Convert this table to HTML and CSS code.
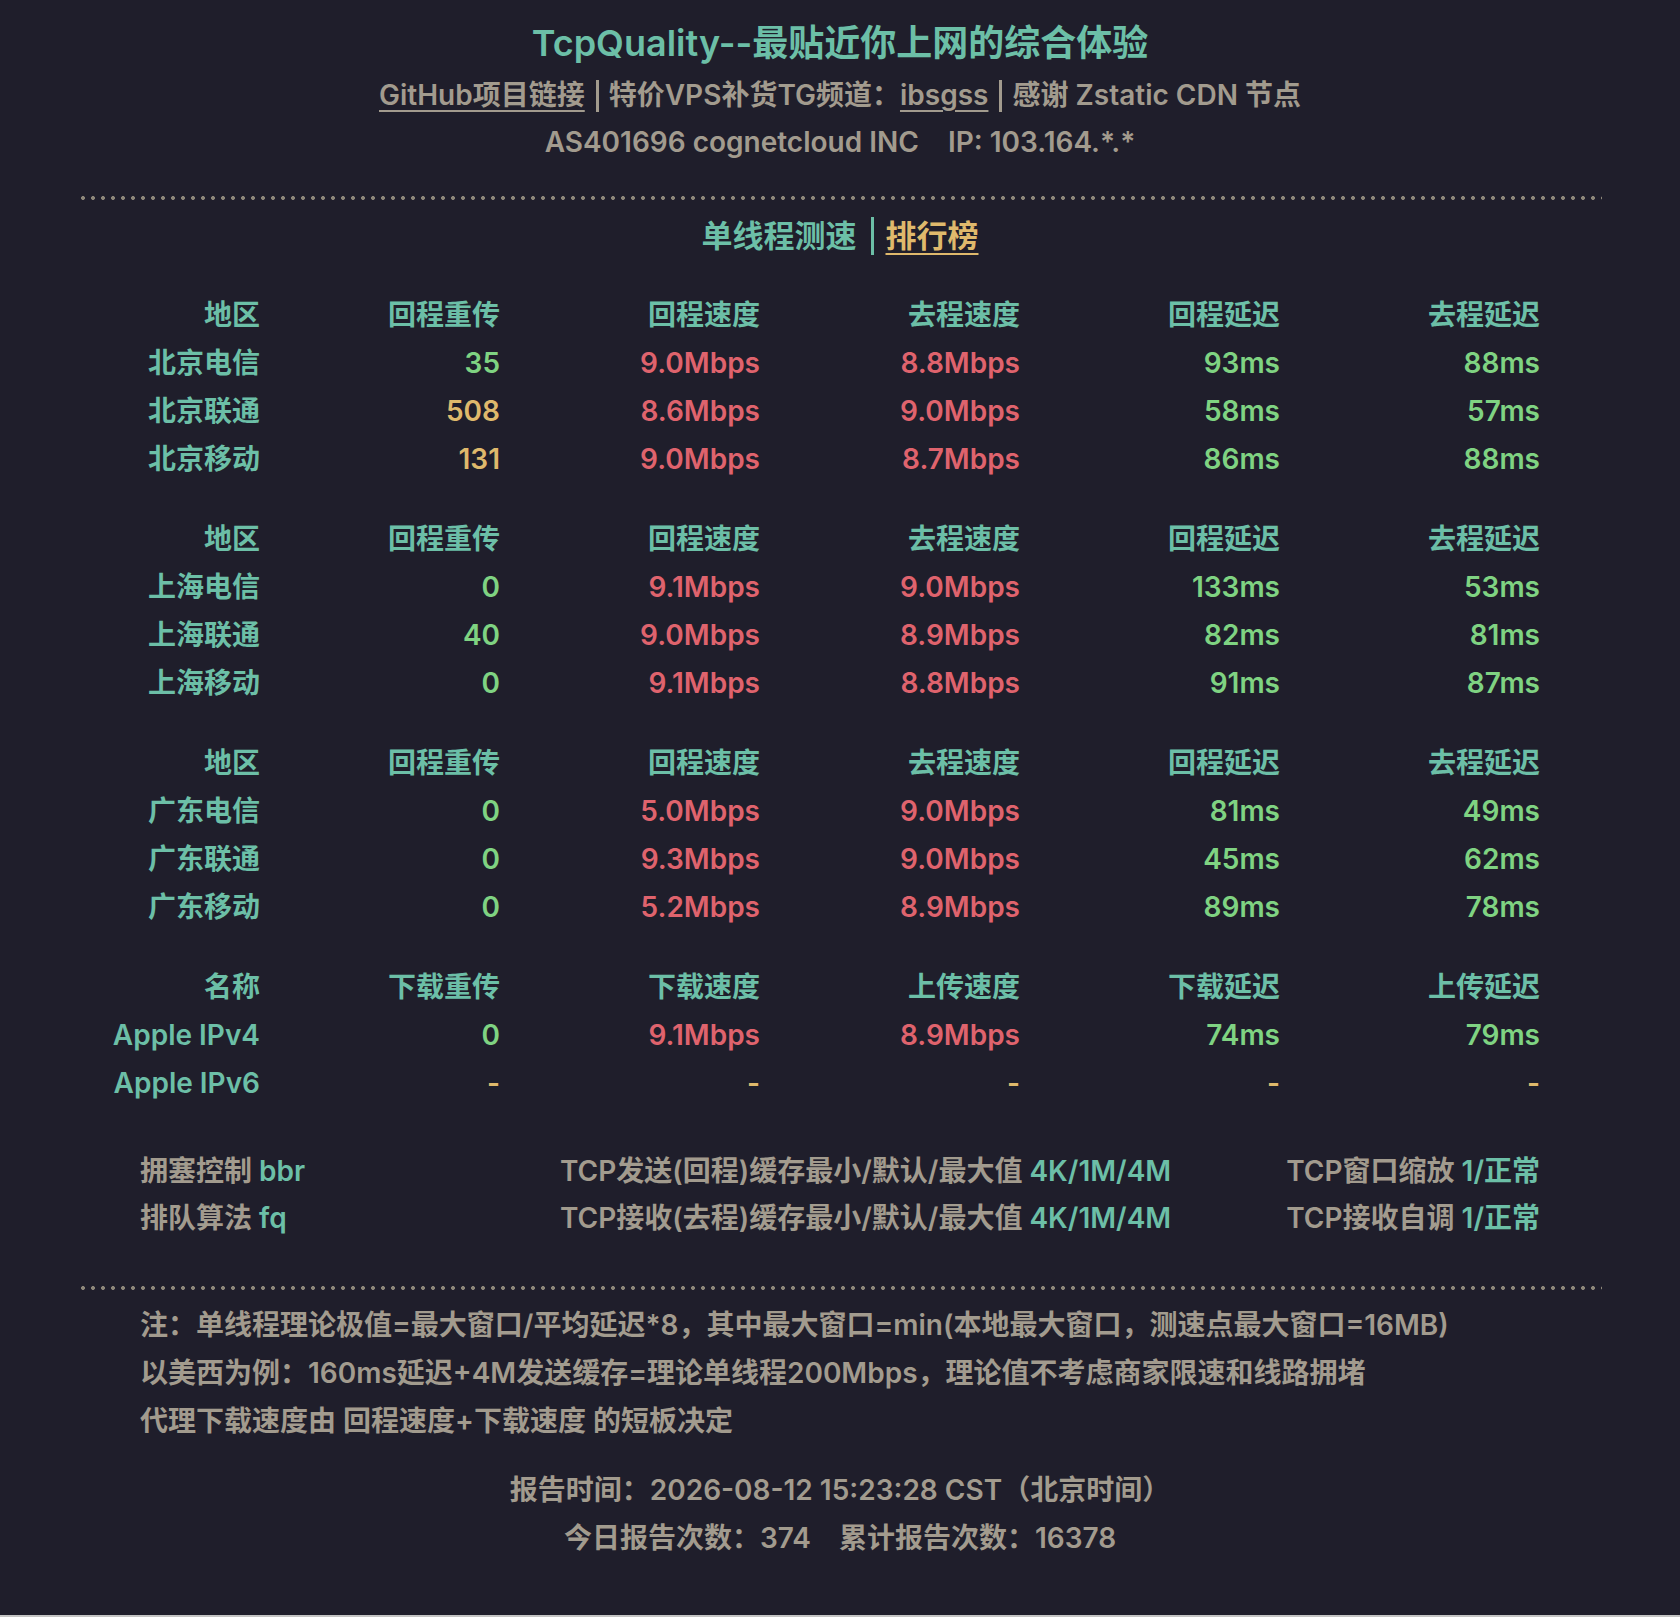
FILE: index.html
```html
<!DOCTYPE html>
<html lang="zh-CN">
<head>
<meta charset="utf-8">
<title>TcpQuality</title>
<link rel="stylesheet" href="styles.css">
</head>
<body>
<div class="page">
  <header class="head">
    <h1 class="title">TcpQuality--最贴近你上网的综合体验</h1>
    <p class="links"><a class="ul">GitHub项目链接</a><span class="sep"></span>特价VPS补货TG频道：<a class="ul">ibsgss</a><span class="sep"></span>感谢 Zstatic CDN 节点</p>
    <p class="asn"><span>AS401696 cognetcloud INC</span><span>IP: 103.164.*.*</span></p>
  </header>

  <div class="dots"></div>

  <h2 class="section">单线程测速<span class="vbar"></span><a class="rank">排行榜</a></h2>

  <div class="groups">
    <div class="grid">
      <div class="h">地区</div><div class="h">回程重传</div><div class="h">回程速度</div><div class="h">去程速度</div><div class="h">回程延迟</div><div class="h">去程延迟</div>
      <div class="h">北京电信</div><div class="g">35</div><div class="r">9.0Mbps</div><div class="r">8.8Mbps</div><div class="g">93ms</div><div class="g">88ms</div>
      <div class="h">北京联通</div><div class="y">508</div><div class="r">8.6Mbps</div><div class="r">9.0Mbps</div><div class="g">58ms</div><div class="g">57ms</div>
      <div class="h">北京移动</div><div class="y">131</div><div class="r">9.0Mbps</div><div class="r">8.7Mbps</div><div class="g">86ms</div><div class="g">88ms</div>
    </div>
    <div class="grid">
      <div class="h">地区</div><div class="h">回程重传</div><div class="h">回程速度</div><div class="h">去程速度</div><div class="h">回程延迟</div><div class="h">去程延迟</div>
      <div class="h">上海电信</div><div class="g">0</div><div class="r">9.1Mbps</div><div class="r">9.0Mbps</div><div class="g">133ms</div><div class="g">53ms</div>
      <div class="h">上海联通</div><div class="g">40</div><div class="r">9.0Mbps</div><div class="r">8.9Mbps</div><div class="g">82ms</div><div class="g">81ms</div>
      <div class="h">上海移动</div><div class="g">0</div><div class="r">9.1Mbps</div><div class="r">8.8Mbps</div><div class="g">91ms</div><div class="g">87ms</div>
    </div>
    <div class="grid">
      <div class="h">地区</div><div class="h">回程重传</div><div class="h">回程速度</div><div class="h">去程速度</div><div class="h">回程延迟</div><div class="h">去程延迟</div>
      <div class="h">广东电信</div><div class="g">0</div><div class="r">5.0Mbps</div><div class="r">9.0Mbps</div><div class="g">81ms</div><div class="g">49ms</div>
      <div class="h">广东联通</div><div class="g">0</div><div class="r">9.3Mbps</div><div class="r">9.0Mbps</div><div class="g">45ms</div><div class="g">62ms</div>
      <div class="h">广东移动</div><div class="g">0</div><div class="r">5.2Mbps</div><div class="r">8.9Mbps</div><div class="g">89ms</div><div class="g">78ms</div>
    </div>
    <div class="grid">
      <div class="h">名称</div><div class="h">下载重传</div><div class="h">下载速度</div><div class="h">上传速度</div><div class="h">下载延迟</div><div class="h">上传延迟</div>
      <div class="h">Apple IPv4</div><div class="g">0</div><div class="r">9.1Mbps</div><div class="r">8.9Mbps</div><div class="g">74ms</div><div class="g">79ms</div>
      <div class="h">Apple IPv6</div><div class="y">-</div><div class="y">-</div><div class="y">-</div><div class="y">-</div><div class="y">-</div>
    </div>
  </div>

  <div class="settings">
    <div>拥塞控制 <b>bbr</b></div><div>TCP发送(回程)缓存最小/默认/最大值 <b>4K/1M/4M</b></div><div class="end">TCP窗口缩放 <b>1/正常</b></div>
    <div>排队算法 <b>fq</b></div><div>TCP接收(去程)缓存最小/默认/最大值 <b>4K/1M/4M</b></div><div class="end">TCP接收自调 <b>1/正常</b></div>
  </div>

  <div class="dots dots2"></div>

  <div class="notes">
    <p>注：单线程理论极值=最大窗口/平均延迟*8，其中最大窗口=min(本地最大窗口，测速点最大窗口=16MB)</p>
    <p>以美西为例：160ms延迟+4M发送缓存=理论单线程200Mbps，理论值不考虑商家限速和线路拥堵</p>
    <p>代理下载速度由 回程速度+下载速度 的短板决定</p>
  </div>

  <footer class="report">
    <p>报告时间：2026-08-12 15:23:28 CST（北京时间）</p>
    <p><span>今日报告次数：374</span><span>累计报告次数：16378</span></p>
  </footer>
</div>
</body>
</html>
```

FILE: styles.css
```css
html {
  background: #c4c4c4;
}
body {
  margin: 0;
  font-family: "Inter", "Noto Sans CJK SC", sans-serif;
  font-weight: 600;
}
.page {
  background: #1f1e2b;
  color: #a29b8e;
  padding: 14px 78px 53px;
  height: 1615px;
  box-sizing: border-box;
}
p, h1, h2 {
  margin: 0;
}
.head {
  text-align: center;
}
.title {
  font-size: 36px;
  line-height: 58px;
  font-weight: 600;
  color: #6cbfa7;
}
.links, .asn {
  font-size: 28px;
  line-height: 47px;
}
.ul {
  color: #a29b8e;
  text-decoration: underline;
  text-underline-offset: 5px;
  text-decoration-thickness: 2px;
}
.sep {
  display: inline-block;
  width: 3px;
  height: 32px;
  background: #a29b8e;
  margin: 0 10px 0 11px;
  vertical-align: -7px;
}
.asn {
  display: flex;
  justify-content: center;
  gap: 29px;
}
.dots {
  height: 4px;
  margin-top: 30px;
  background-image: radial-gradient(circle, #8c8679 1.8px, transparent 2.2px);
  background-size: 10px 4px;
  background-repeat: repeat-x;
}
.section {
  margin-top: 12px;
  text-align: center;
  font-size: 31px;
  line-height: 48px;
  font-weight: 600;
  color: #6cbfa7;
}
.vbar {
  display: inline-block;
  width: 3px;
  height: 38px;
  background: #6cbfa7;
  margin: 0 12px 0 14px;
  vertical-align: -8px;
}
.rank {
  color: #dfb96c;
  text-decoration: underline;
  text-underline-offset: 6px;
  text-decoration-thickness: 2px;
}
.groups {
  margin: 31px 0 0 32px;
  display: flex;
  flex-direction: column;
  gap: 32px;
}
.grid {
  display: grid;
  grid-template-columns: 150px 240px repeat(4, 260px);
  grid-auto-rows: 48px;
  font-size: 28px;
  line-height: 48px;
  text-align: right;
}
.h { color: #6cbfa7; }
.g { color: #7fd382; }
.r { color: #df636d; }
.y { color: #dfb96c; }

.settings {
  margin: 41px 0 0 62px;
  width: 1400px;
  display: grid;
  grid-template-columns: 420px 1fr auto;
  grid-auto-rows: 47px;
  font-size: 28px;
  line-height: 47px;
}
.settings b {
  font-weight: 600;
  color: #6cbfa7;
}
.end {
  justify-self: end;
}
.dots2 {
  margin-top: 44px;
}
.notes {
  margin: 11px 0 0 62px;
  font-size: 28px;
  line-height: 48px;
}
.report {
  margin-top: 21px;
  text-align: center;
  font-size: 28px;
  line-height: 48px;
}
.report span + span {
  margin-left: 28px;
}
```
